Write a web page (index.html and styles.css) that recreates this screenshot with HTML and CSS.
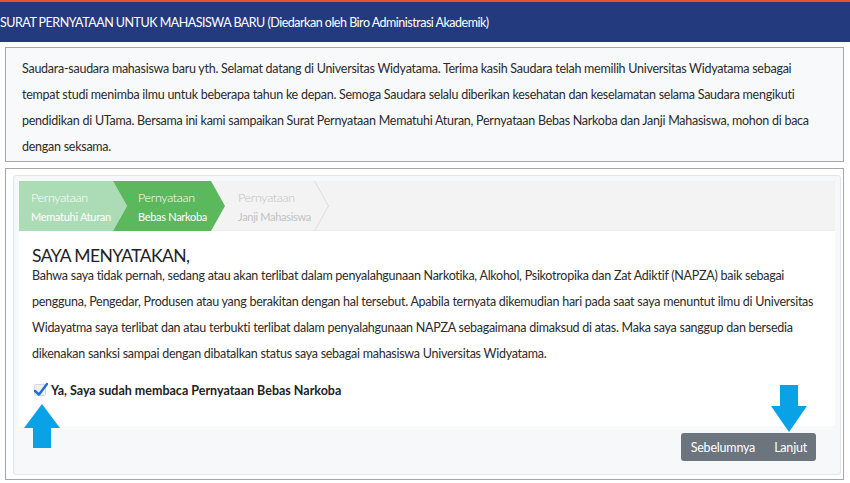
FILE: index.html
```html
<!DOCTYPE html>
<html lang="id">
<head>
<meta charset="utf-8">
<title>Surat Pernyataan</title>
<link rel="stylesheet" href="styles.css">
</head>
<body>
<header class="topbar">SURAT PERNYATAAN UNTUK MAHASISWA BARU (Diedarkan oleh Biro Administrasi Akademik)</header>
<main class="main">
  <section class="intro">
    <p>Saudara-saudara mahasiswa baru yth. Selamat datang di Universitas Widyatama. Terima kasih Saudara telah memilih Universitas Widyatama sebagai tempat studi menimba ilmu untuk beberapa tahun ke depan. Semoga Saudara selalu diberikan kesehatan dan keselamatan selama Saudara mengikuti pendidikan di UTama. Bersama ini kami sampaikan Surat Pernyataan Mematuhi Aturan, Pernyataan Bebas Narkoba dan Janji Mahasiswa, mohon di baca dengan seksama.</p>
  </section>
  <section class="form-box">
    <div class="card">
      <ol class="steps">
        <li class="step step-done"><span class="step-title">Pernyataan</span><span class="step-sub">Mematuhi Aturan</span></li>
        <li class="step step-current"><span class="step-title">Pernyataan</span><span class="step-sub">Bebas Narkoba</span></li>
        <li class="step step-next">
          <div class="step-text"><span class="step-title">Pernyataan</span><span class="step-sub">Janji Mahasiswa</span></div>
          <svg class="chev" width="15" height="50" viewBox="0 0 15 50"><polyline points="0.5,0 14.5,25 0.5,50" fill="none" stroke="#dcdcdc" stroke-width="1"/></svg>
        </li>
      </ol>
      <div class="content">
        <h2 class="heading">SAYA MENYATAKAN,</h2>
        <p class="statement">Bahwa saya tidak pernah, sedang atau akan terlibat dalam penyalahgunaan Narkotika, Alkohol, Psikotropika dan Zat Adiktif (NAPZA) baik sebagai pengguna, Pengedar, Produsen atau yang berakitan dengan hal tersebut. Apabila ternyata dikemudian hari pada saat saya menuntut ilmu di Universitas Widayatma saya terlibat dan atau terbukti terlibat dalam penyalahgunaan NAPZA sebagaimana dimaksud di atas. Maka saya sanggup dan bersedia dikenakan sanksi sampai dengan dibatalkan status saya sebagai mahasiswa Universitas Widyatama.</p>
        <label class="agree">
          <svg class="check" width="14" height="14" viewBox="0 0 14 14"><rect x="0.5" y="1.5" width="11" height="11" rx="1" fill="#eef0f3" stroke="#d4d7dc"/><path d="M1 8 L5 11.5 L13 1" fill="none" stroke="#1f6fcf" stroke-width="2.4" stroke-linecap="round" stroke-linejoin="round"/></svg>
          <span>Ya, Saya sudah membaca Pernyataan Bebas Narkoba</span>
        </label>
      </div>
      <div class="footer">
        <div class="btn-group">
          <button class="btn">Sebelumnya</button>
          <button class="btn">Lanjut</button>
        </div>
      </div>
    </div>
    <svg class="arrow arrow-up" width="36" height="44" viewBox="0 0 36 44"><polygon points="18,0 36,24 27,24 27,44 9,44 9,24 0,24" fill="#0aa2e6"/></svg>
    <svg class="arrow arrow-down" width="36" height="47" viewBox="0 0 36 47"><polygon points="9,0 27,0 27,21 36,21 18,47 0,21 9,21" fill="#0aa2e6"/></svg>
  </section>
</main>
</body>
</html>
```
FILE: styles.css
```css
* { box-sizing: border-box; }
body {
  margin: 0;
  font-family: Lato, "Open Sans", sans-serif;
  font-size: 12.5px;
  letter-spacing: -0.26px;
  color: #2b2b2b;
  background: #fff;
}
.topbar {
  height: 42px;
  border-top: 2px solid #e5552a;
  background: #243a7e;
  color: #fff;
  display: flex;
  align-items: center;
  font-size: 12.5px;
  letter-spacing: -0.5px;
  padding-left: 0;
  white-space: nowrap;
}
.main {
  padding: 0 6px 0 5px;
}
.intro {
  margin-top: 5px;
  border: 1px solid #a4a6aa;
  background: #f8f9fa;
  padding: 8px 30px 1px 16px;
}
.intro p {
  margin: 0;
  line-height: 26px;
}
.form-box {
  position: relative;
  margin-top: 6px;
  border: 1px solid #a4a6aa;
  padding: 6px 2px 4px 7px;
  background: #fff;
}
.card {
  border: 1px solid #e3e5e8;
  border-radius: 3px;
  background: #f7f8fa;
  padding: 5px 5px 0 5px;
}
.steps {
  list-style: none;
  margin: 0;
  padding: 0;
  height: 50px;
  display: flex;
  background: #f3f3f3;
  border-bottom: 1px solid #ececec;
}
.step {
  height: 50px;
  display: flex;
  flex-direction: column;
  padding-top: 8px;
  color: #fff;
  white-space: nowrap;
}
.step-title {
  font-size: 12.5px;
  font-weight: 300;
  line-height: 18px;
  letter-spacing: -0.3px;
}
.step-sub {
  font-size: 11px;
  line-height: 16px;
  margin-top: 2px;
  letter-spacing: -0.3px;
}
.step-done {
  width: 108px;
  padding-left: 12px;
  background: #abdcb6;
  clip-path: polygon(0 0, 94px 0, 108px 50%, 94px 100%, 0 100%);
}
.step-current {
  width: 112px;
  margin-left: -14px;
  padding-left: 25px;
  background: #5cb85c;
  clip-path: polygon(0 0, 98px 0, 112px 50%, 98px 100%, 0 100%, 14px 50%);
}
.step-next {
  width: 118px;
  margin-left: -14px;
  padding: 0 0 0 27px;
  flex-direction: row;
  color: #c2c2c2;
}
.step-next .step-text {
  display: flex;
  flex-direction: column;
  padding-top: 8px;
}
.chev { margin-left: auto; display: block; }
.content {
  background: #fff;
  padding: 16px 13px 23px;
}
.heading {
  margin: 0;
  font-size: 17.5px;
  font-weight: 400;
  letter-spacing: -0.6px;
  line-height: 18px;
  margin-bottom: -2px;
  color: #222;
}
.statement {
  margin: 0;
  line-height: 26px;
}
.agree {
  margin-top: 10px;
  display: flex;
  align-items: center;
  gap: 3px;
  height: 26px;
  font-weight: 700;
  letter-spacing: 0;
  color: #222;
  padding-left: 2px;
}
.check { display: block; }
.footer {
  display: flex;
  justify-content: flex-end;
  padding: 7px 19px 13px;
}
.btn-group {
  display: flex;
  background: #6c757d;
  border-radius: 3px;
  height: 28px;
}
.btn {
  border: 0;
  background: transparent;
  color: #fff;
  font: inherit;
  font-size: 12.5px;
  letter-spacing: -0.2px;
  padding: 0 9px 0 10px;
  cursor: pointer;
}
.arrow { position: absolute; display: block; }
.arrow-up { left: 18px; top: 235px; }
.arrow-down { left: 765px; top: 216px; }
```
